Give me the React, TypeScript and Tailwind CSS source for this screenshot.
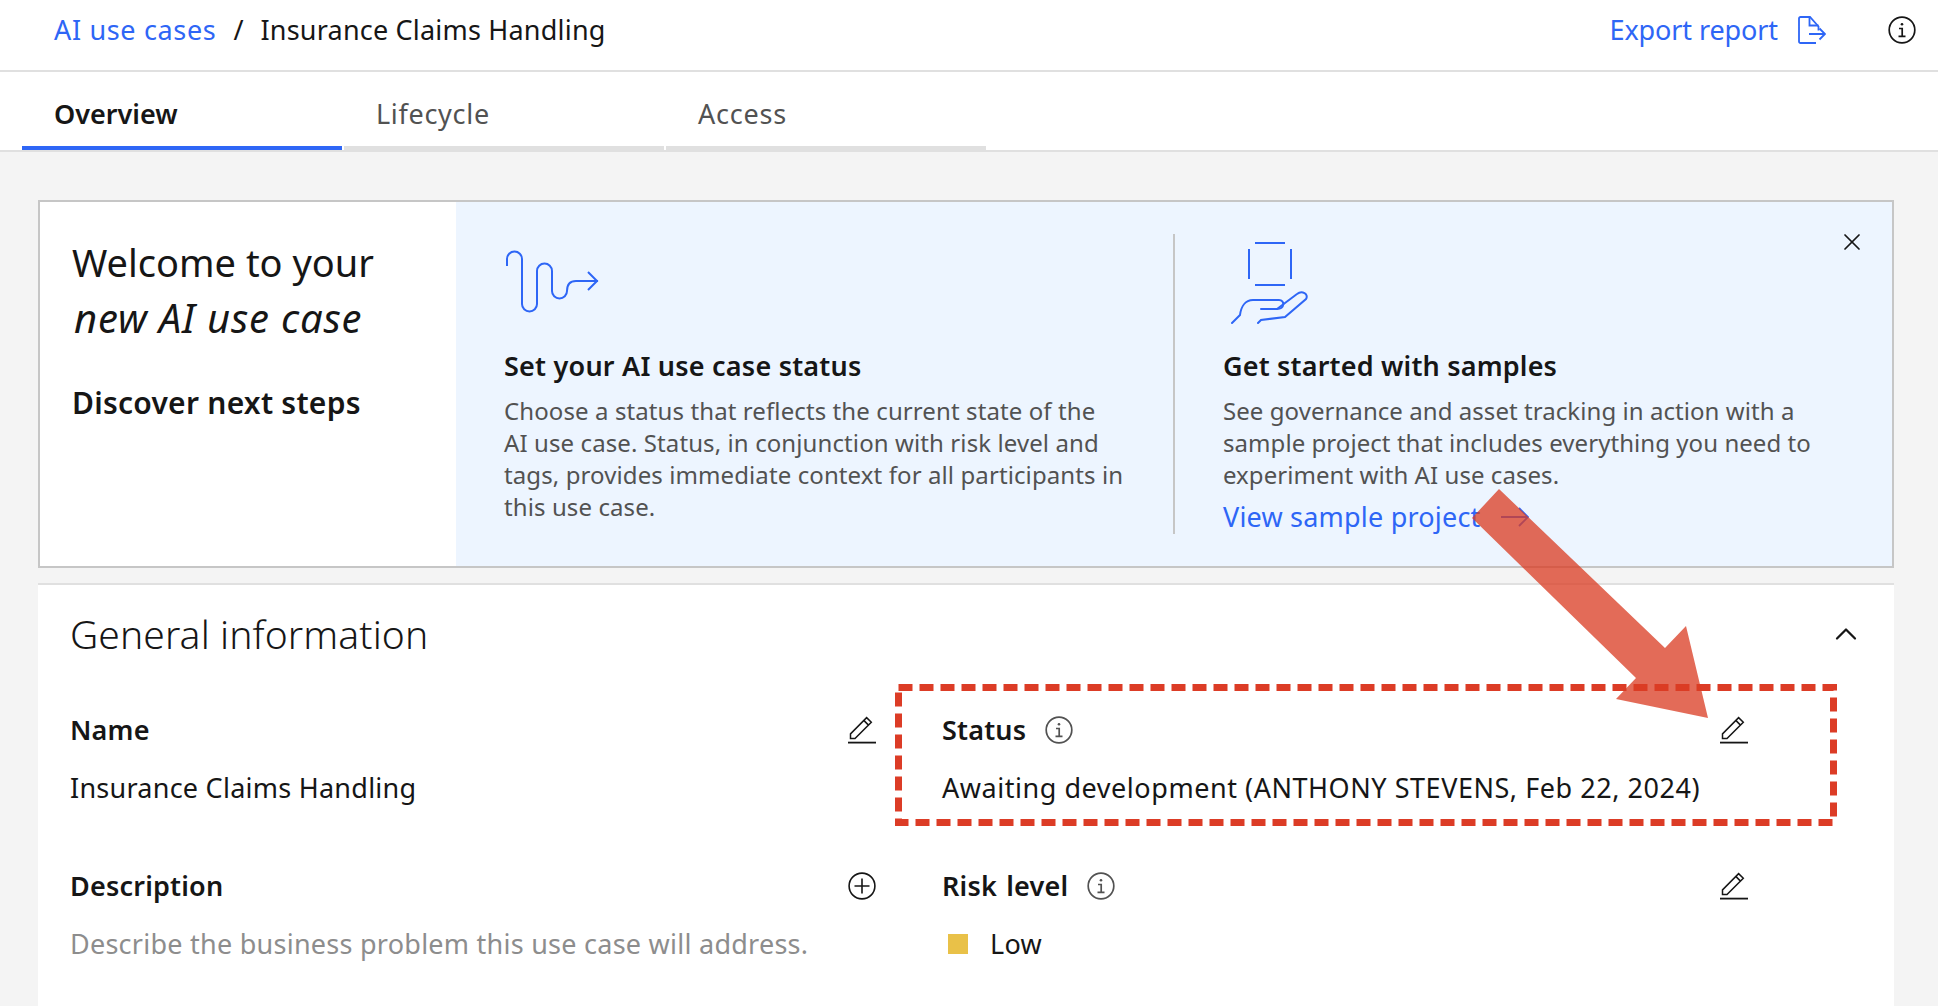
import React from 'react';
import { X, ChevronUp } from 'lucide-react';

const font = "font-['Noto_Sans','Liberation_Sans',sans-serif]";

const InfoIcon = ({ className }: { className?: string }) => (
  <svg viewBox="0 0 28 28" fill="none" stroke="currentColor" strokeWidth="1.7" className={className}>
    <circle cx="14" cy="14" r="12.8" />
    <path d="M11 12.5h3.2V20M10.500 20.300h7" />
    <circle cx="14" cy="8.200" r="1.300" fill="currentColor" stroke="none" />
  </svg>
);

const EditIcon = () => (
  <svg viewBox="0 0 28 28" fill="none" stroke="currentColor" strokeWidth="1.5" className="h-7 w-7 shrink-0 text-[#161616]">
    <path d="M0 26.600h28" strokeWidth="1.800" />
    <path d="M2.500 22.500v-4.600L18.600 1.600l4.700 4.700L7 22.500zM15.800 4.400l4.700 4.700" />
  </svg>
);

const PlusIcon = () => (
  <svg viewBox="0 0 28 28" fill="none" stroke="currentColor" strokeWidth="1.6" className="h-7 w-7 shrink-0 text-[#161616]">
    <circle cx="14" cy="14" r="12.900" />
    <path d="M14 6.500v15M6.500 14h15" />
  </svg>
);

const ExportIcon = () => (
  <svg viewBox="0 0 28 28" fill="none" stroke="currentColor" strokeWidth="1.8" className="h-7 w-7 shrink-0">
    <path d="M18 27H2.500A1.500 1.500 0 0 1 1 25.500v-23A1.500 1.500 0 0 1 2.500 1h9.500l8.500 9.500v4" />
    <path d="M11.500 1v8.500h9M11 18h16M21.500 12.500L27 18l-5.500 5.500" />
  </svg>
);

const LinkArrow = () => (
  <svg viewBox="0 0 28 20" fill="none" stroke="currentColor" strokeWidth="1.800" className="h-5 w-7 shrink-0">
    <path d="M0 10h27M18 1l9 9-9 9" />
  </svg>
);

const PathIcon = () => (
  <svg viewBox="45 30 95 64" fill="none" stroke="currentColor" strokeWidth="2" className="h-16 w-[95px] text-[#2e66f6]">
    <path d="M47 47v-7a7.500 7.500 0 0 1 15 0v45a7.500 7.500 0 0 0 15 0V52a7.500 7.500 0 0 1 15 0v20a7.500 7.500 0 0 0 15 0c0-6 3-10 9-10h22" />
    <path d="M128 53l9 9-9 9" />
  </svg>
);

const HandIcon = () => (
  <svg viewBox="30 20 80 86" fill="none" stroke="currentColor" strokeWidth="2" strokeLinecap="round" className="h-[86px] w-20 text-[#2e66f6]">
    <path d="M56 23h30M56 65h30M50 29v30M92 29v30" strokeLinecap="butt" />
    <path d="M33 103l8-8c1-8 5-15 13-15h26c6 0 6 9-2 9H62" />
    <path d="M78 89l20-15c5-4 12 0 9 5L86 97l-24 3-3 3" />
  </svg>
);

const Field = ({
  label,
  info,
  action,
  children,
}: {
  label: string;
  info?: boolean;
  action: React.ReactNode;
  children: React.ReactNode;
}) => (
  <div className="flex h-[156px] flex-col">
    <div className="flex h-9 items-center justify-between">
      <div className="flex items-center gap-[19px]">
        <span className="text-[27px] font-semibold leading-9 tracking-[0.2px] [word-spacing:2px] text-[#161616]">{label}</span>
        {info && <InfoIcon className="h-7 w-7 text-[#525252]" />}
      </div>
      {action}
    </div>
    <div className="mt-[22px] flex h-9 items-center text-[27px] leading-9 tracking-[0.25px] text-[#161616]">{children}</div>
  </div>
);

const Annotation = () => (
  <svg viewBox="0 0 1938 1006" className="pointer-events-none absolute left-0 top-0 h-[1006px] w-[1938px]">
    <rect x="898.500" y="687.500" width="935" height="135" fill="none" stroke="#dc3c26" strokeWidth="7" strokeDasharray="14 7" />
    <polygon
      points="1499,489 1472,518 1636,678 1616,699 1708,718 1686,626 1665,648"
      fill="#da3c23"
      fillOpacity="0.76"
    />
  </svg>
);

export default function App() {
  return (
    <div className={`${font} relative h-[1006px] w-[1938px] overflow-hidden bg-[#f4f4f4]`}>
      <header className="flex h-[72px] items-center justify-between border-b-2 border-[#e0e0e0] bg-white pb-[10px] pl-[54px] pr-[22px] text-[27px]">
        <nav className="flex items-center gap-[17px]">
          <a className="tracking-[0.66px] text-[#2e66f6]">AI use cases</a>
          <span className="text-[#161616]">/</span>
          <span className="tracking-[0.2px] text-[#161616]">Insurance Claims Handling</span>
        </nav>
        <div className="flex items-center">
          <a className="flex items-center gap-[20px] tracking-[-0.1px] text-[#2e66f6]">
            Export report
            <ExportIcon />
          </a>
          <InfoIcon className="ml-[62px] h-7 w-7 text-[#161616]" />
        </div>
      </header>

      <div className="h-[80px] border-b-2 border-[#e0e0e0] bg-white pl-[22px]">
        <div className="flex h-full gap-[2px] text-[27px]">
          <div className="flex w-[320px] items-center border-b-4 border-[#2e66f6] pl-8 pt-[10px] font-semibold text-[#161616]">Overview</div>
          <div className="flex w-[320px] items-center border-b-4 border-[#e0e0e0] pl-8 pt-[10px] tracking-[0.7px] text-[#525252]">Lifecycle</div>
          <div className="flex w-[320px] items-center border-b-4 border-[#e0e0e0] pl-8 pt-[10px] tracking-[0.8px] text-[#525252]">Access</div>
        </div>
      </div>

      <main className="mt-[48px] ml-[38px] w-[1856px]">
        <section className="flex h-[368px] border-2 border-[#c6c6c6] bg-[#edf5ff]">
          <div className="w-[416px] shrink-0 bg-white pl-[32px] pt-[32px]">
            <h1 className="text-[38px] leading-[56px] text-[#161616]">
              Welcome to your
              <br />
              <em className="ml-[2px] text-[40px] tracking-[0.8px]">new AI use case</em>
            </h1>
            <h2 className="mt-[37px] text-[30px] font-semibold leading-10 tracking-[0.25px] text-[#161616]">Discover next steps</h2>
          </div>

          <div className="w-[717px] shrink-0 pb-8 pl-12 pt-[47px]">
            <div className="ml-[1px]">
              <PathIcon />
            </div>
            <h3 className="mt-[35px] text-[27px] font-semibold leading-9 tracking-[0.22px] text-[#161616]">Set your AI use case status</h3>
            <p className="mt-[11px] text-[24px] leading-8 tracking-[0.1px] text-[#525252]">
              Choose a status that reflects the current state of the
              <br />
              AI use case. Status, in conjunction with risk level and
              <br />
              tags, provides immediate context for all participants in
              <br />
              this use case.
            </p>
          </div>

          <div className="relative my-8 flex-1 border-l-2 border-[#c6c6c6] pl-12">
            <div className="ml-[6px] h-[86px] pt-[6px]">
              <HandIcon />
            </div>
            <h3 className="mt-[28px] text-[27px] font-semibold leading-9 tracking-[0.18px] text-[#161616]">Get started with samples</h3>
            <p className="mt-[11px] text-[24px] leading-8 tracking-[0.06px] text-[#525252]">
              See governance and asset tracking in action with a
              <br />
              sample project that includes everything you need to
              <br />
              experiment with AI use cases.
            </p>
            <a className="mt-[8px] flex items-center gap-5 text-[27px] leading-9 tracking-[0.2px] text-[#2e66f6]">
              View sample project
              <LinkArrow />
            </a>
            <X className="absolute right-[26px] top-[-6px] h-7 w-7 text-[#161616]" strokeWidth={1.5} />
          </div>
        </section>

        <section className="mt-[15px] h-[500px] border-t-2 border-[#e0e0e0] bg-white px-8">
          <div className="flex h-[96px] items-center justify-between pt-[2px]">
            <h2 className="text-[39px] font-light tracking-[0.1px] text-[#161616]">General information</h2>
            <ChevronUp className="-mr-[2px] h-9 w-9 text-[#161616]" strokeWidth={1.5} />
          </div>
          <div className="mt-[31px] grid w-[1678px] grid-cols-2 gap-x-[66px]">
            <Field label="Name" action={<EditIcon />}>
              Insurance Claims Handling
            </Field>
            <Field label="Status" info action={<EditIcon />}>
              <span className="tracking-[0.54px]">Awaiting development (ANTHONY STEVENS, Feb 22, 2024)</span>
            </Field>
            <Field label="Description" action={<PlusIcon />}>
              <span className="text-[#8d8d8d]">Describe the business problem this use case will address.</span>
            </Field>
            <Field label="Risk level" info action={<EditIcon />}>
              <span className="ml-[6px] h-5 w-5 bg-[#e9c148]" />
              <span className="ml-[22px]">Low</span>
            </Field>
          </div>
        </section>
      </main>

      <Annotation />
    </div>
  );
}
